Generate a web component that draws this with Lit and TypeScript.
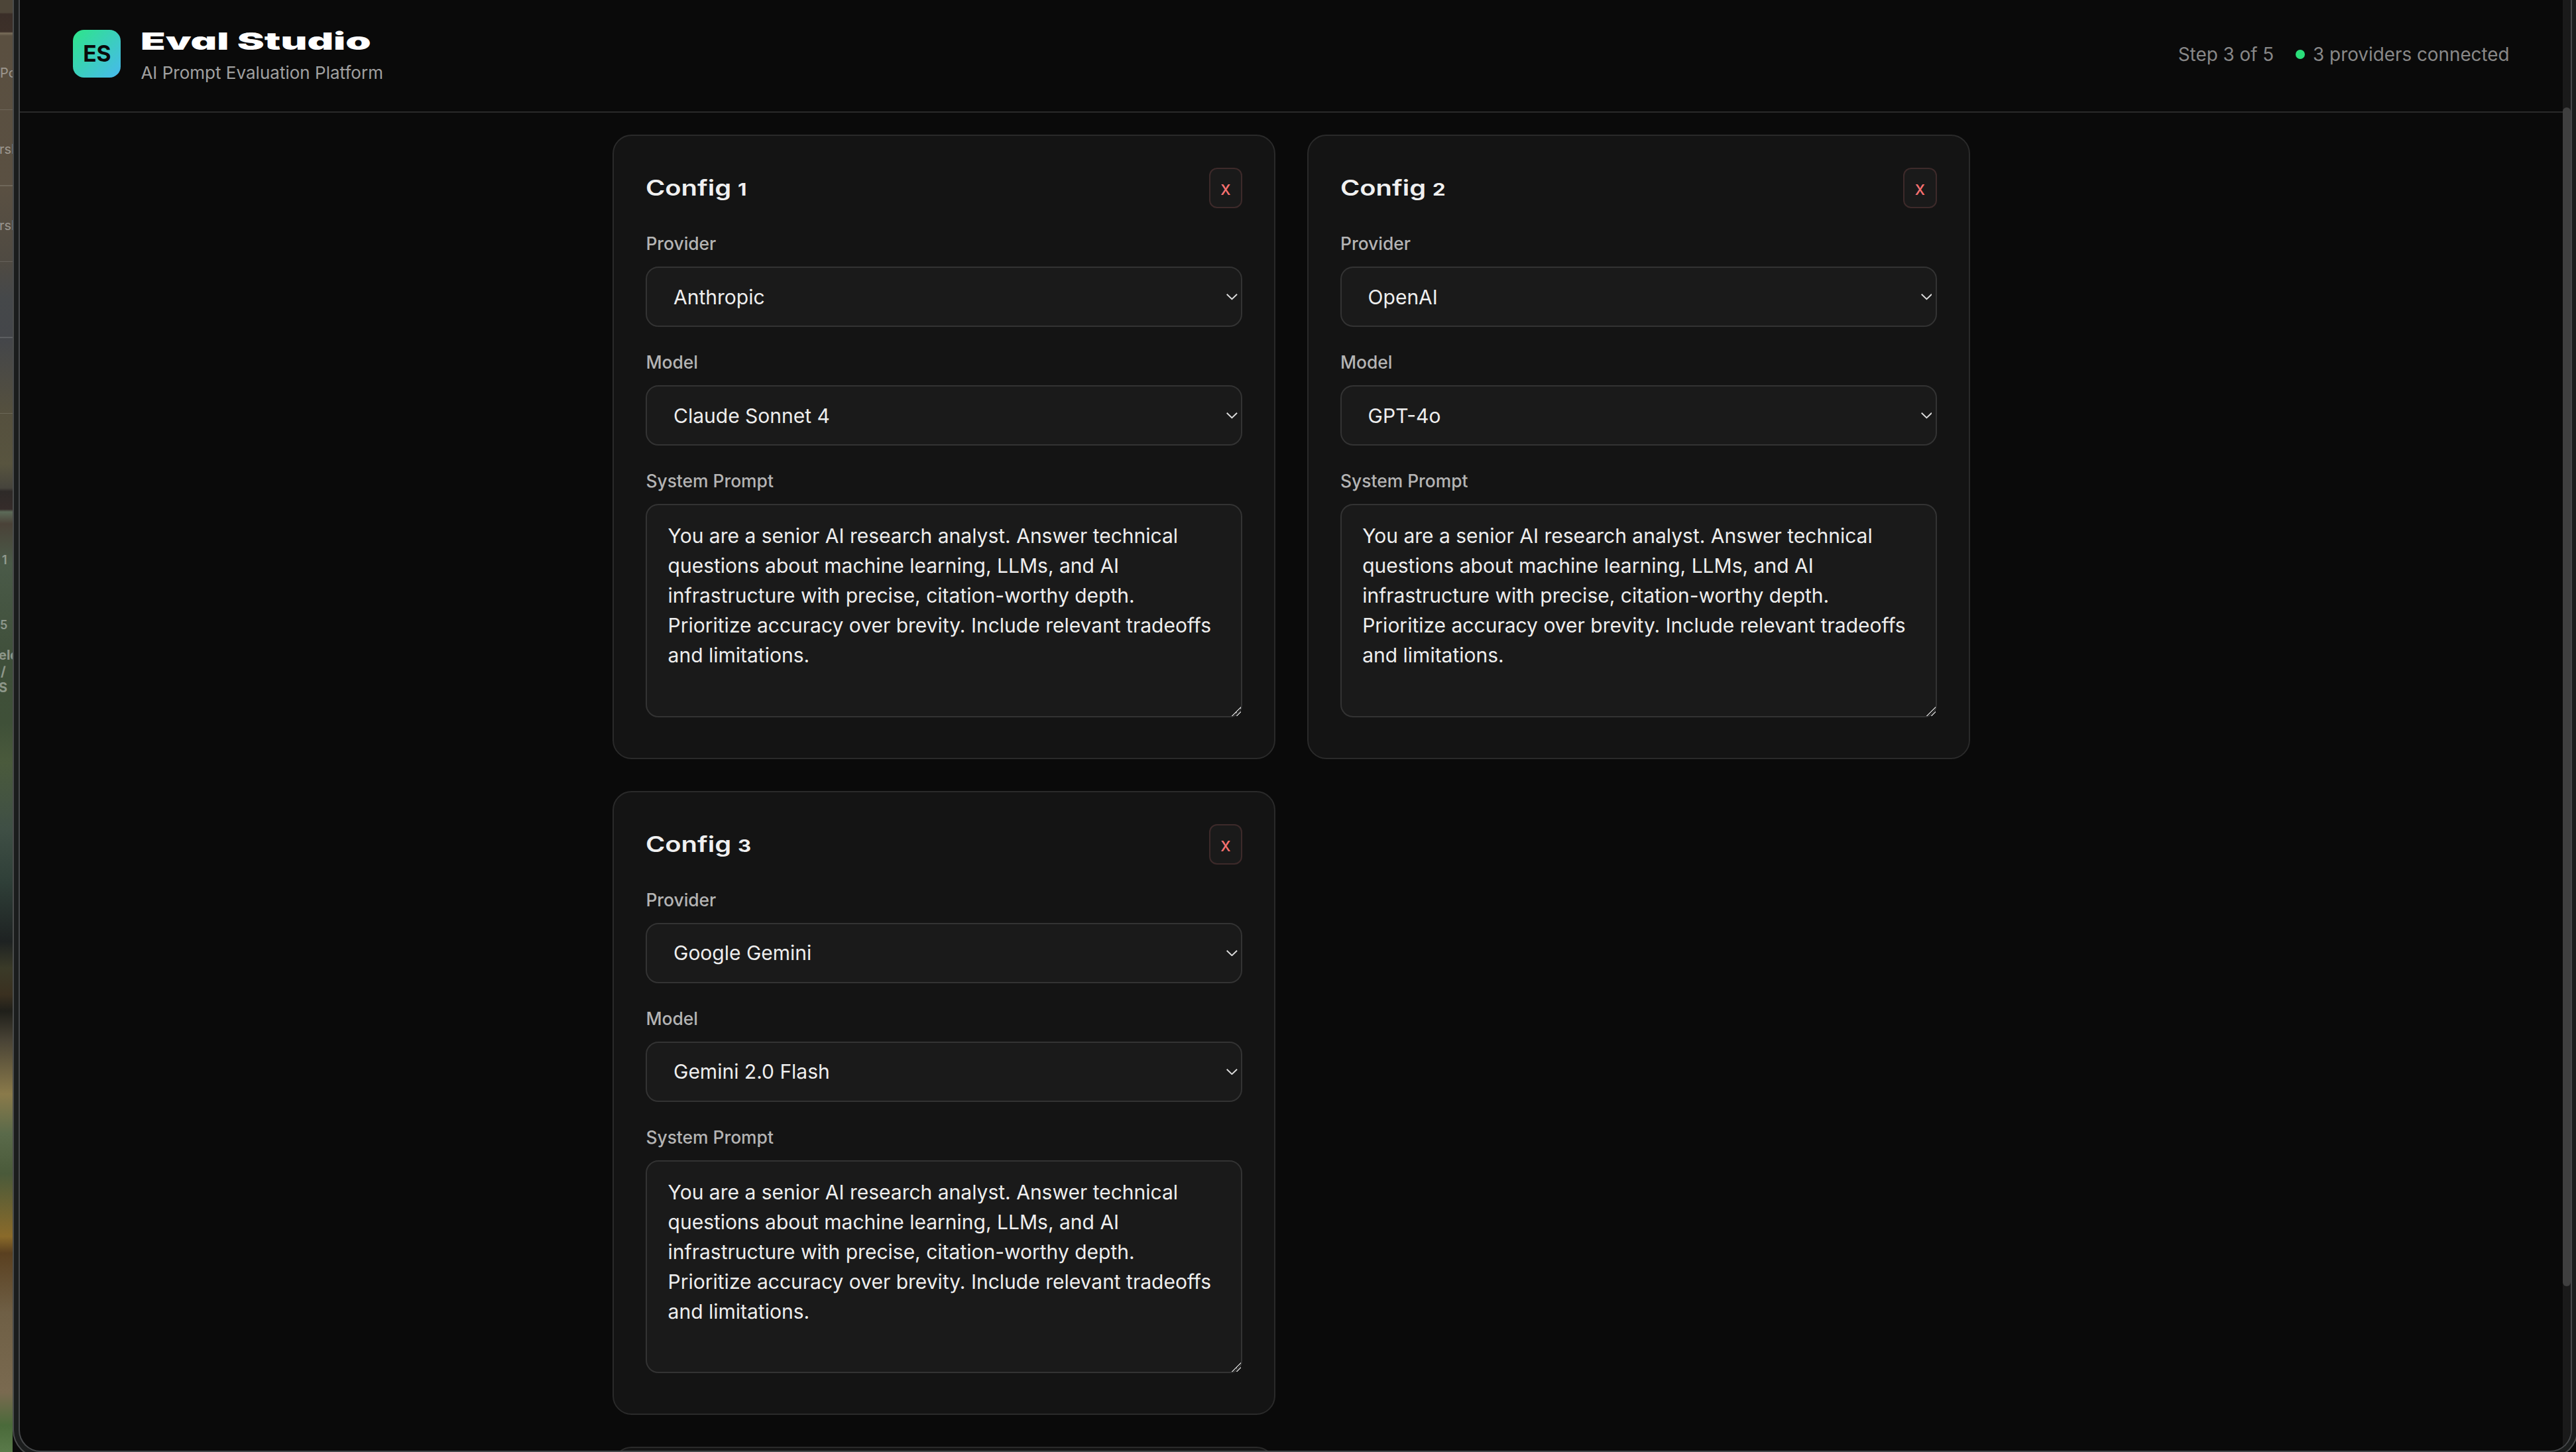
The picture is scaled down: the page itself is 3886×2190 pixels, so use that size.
import { LitElement, html, css } from 'lit';
import { customElement } from 'lit/decorators.js';

const PROMPT =
  'You are a senior AI research analyst. Answer technical questions about machine learning, LLMs, and AI infrastructure with precise, citation-worthy depth. Prioritize accuracy over brevity. Include relevant tradeoffs and limitations.';

const CONFIGS = [
  { n: 1, provider: 'Anthropic', model: 'Claude Sonnet 4' },
  { n: 2, provider: 'OpenAI', model: 'GPT-4o' },
  { n: 3, provider: 'Google Gemini', model: 'Gemini 2.0 Flash' },
];

// bits of the window behind that peek out on the left edge
const BEHIND = [
  { t: 'Po', x: 0, y: 98, s: 20, w: 400 },
  { t: 'rsh', x: -1, y: 213, s: 20, w: 400 },
  { t: 'rsh', x: -1, y: 328, s: 20, w: 400 },
  { t: '1', x: 3, y: 834, s: 18, w: 600 },
  { t: '5', x: 0, y: 932, s: 18, w: 600 },
  { t: 'eld', x: -2, y: 976, s: 20, w: 700 },
  { t: '/', x: 1, y: 1001, s: 20, w: 700 },
  { t: 'S', x: -2, y: 1025, s: 20, w: 700 },
];

@customElement('app-root')
export class AppRoot extends LitElement {
  static override styles = css`
    :host {
      display: flex;
      width: 3886px;
      height: 2190px;
      overflow: hidden;
      background: #0a0a0a;
      font-family: Inter, 'Noto Sans', sans-serif;
    }

    .behind {
      flex: none;
      width: 19px;
      height: 100%;
      position: relative;
      overflow: hidden;
      background:
        repeating-linear-gradient(to bottom, transparent 0 113px, rgba(255, 255, 255, 0.13) 113px 114.4px) 0 52px / 100% 600px no-repeat,
        linear-gradient(to bottom,
          #4d4538 0, #4d4538 19px, #3a2e28 21px, #3d3029 48px, #7a6f5c 50px, #5a4f40 54px,
          #5a5042 280px, #4f4a42 394px, #45484a 450px, #44464a 510px, #55503e 624px, #58543f 700px,
          #46443c 736px, #2e2a28 741px, #352c2a 768px, #5c6a58 772px, #4a4238 790px, #4a5a48 850px,
          #3f4f3a 1000px, #3f5038 1090px, #4a5a3c 1150px, #3f4f45 1250px, #2f3f38 1330px, #1e2222 1420px,
          #3a3a28 1460px, #3a3020 1500px, #1f1f1a 1525px, #4a4436 1570px, #8a7a4a 1650px, #5a6a4a 1710px,
          #4a5a3a 1770px, #8a6a2a 1865px, #5a4020 1890px, #6f5f45 1980px, #7a6a50 2100px, #4a6a3a 2150px, #5a7a4a 2190px);
    }

    .behind span {
      position: absolute;
      color: rgba(255, 255, 255, 0.42);
      line-height: 1.2;
      white-space: nowrap;
    }

    .frame {
      flex: none;
      box-sizing: border-box;
      width: 3870px;
      height: 2199px;
      padding: 0 7px 7px;
      background: #1b1d1d;
      border: solid #4a4c4c;
      border-width: 0 2px 2px;
      border-radius: 0 0 42px 42px;
    }

    .window {
      box-sizing: border-box;
      display: flex;
      height: 100%;
      overflow: hidden;
      background: #0a0a0a;
      border: solid #46484a;
      border-width: 0 2px 2px;
      border-radius: 0 0 33px 33px;
    }

    .page {
      flex: 1;
      min-width: 0;
      overflow: hidden;
      zoom: 2.4;
    }

    .track {
      flex: none;
      width: 12px;
      background: #1a1a1a;
    }

    .thumb {
      height: 1778px;
      margin-top: 162px;
      background: #3f3f3f;
      border-radius: 6px;
    }

    header {
      box-sizing: border-box;
      display: flex;
      align-items: center;
      justify-content: space-between;
      height: 71px;
      padding: 0 33.5px 3px;
      border-bottom: 1px solid #2a2a2a;
    }

    .brand {
      display: flex;
      align-items: center;
      gap: 12.5px;
    }

    .logo {
      width: 30px;
      height: 30px;
      display: flex;
      align-items: center;
      justify-content: center;
      border-radius: 7px;
      background: linear-gradient(135deg, #2ee589, #47b9ee);
      color: #0a0a0a;
      font-size: 14px;
      font-weight: 700;
    }

    h1 {
      margin: 1.3px 0 2.7px;
      color: #fff;
      font-size: 15px;
      font-weight: 900;
      line-height: 20px;
      font-feature-settings: 'cv11';
      transform: scaleX(1.71);
      transform-origin: left;
    }

    .tag {
      color: #a0a0a0;
      font-size: 10.85px;
      line-height: 14px;
    }

    .status {
      display: flex;
      align-items: center;
      color: #888;
      font-size: 11.6px;
      padding-top: 1px;
    }

    .dot {
      width: 6px;
      height: 6px;
      margin: 0 5px 0 13.5px;
      border-radius: 50%;
      background: #2ade7a;
    }

    main {
      display: grid;
      grid-template-columns: 416.5px 416.5px;
      justify-content: center;
      gap: 20px;
      padding-top: 13.7px;
    }

    .card {
      box-sizing: border-box;
      height: 392.3px;
      padding: 20px;
      background: #141414;
      border: 1px solid #2a2a2a;
      border-radius: 12px;
    }

    .card.next {
      grid-column: 1;
    }

    .card-head {
      display: flex;
      align-items: center;
      justify-content: space-between;
      margin-bottom: 14px;
    }

    h3 {
      margin: 0;
      color: #f0f0f0;
      font-size: 13.5px;
      font-weight: 600;
      transform: scaleX(1.23);
      transform-origin: left;
    }

    h3 span {
      font-size: 0.78em;
      font-weight: 700;
    }

    .remove {
      width: 21px;
      height: 25.5px;
      padding: 0;
      background: #1a1a1a;
      border: 1px solid #3d2a2a;
      border-radius: 5px;
      color: #f87171;
      font-family: inherit;
      font-size: 12px;
    }

    label {
      display: block;
      margin-bottom: 6px;
      color: #b4b4b4;
      font-size: 11px;
      font-weight: 550;
      line-height: 16.6px;
    }

    .select-wrap {
      position: relative;
      margin-bottom: 14px;
    }

    .select-wrap svg {
      position: absolute;
      top: 50%;
      right: 3px;
      width: 7px;
      height: 4px;
      margin-top: -2px;
      pointer-events: none;
    }

    select,
    textarea {
      display: block;
      box-sizing: border-box;
      width: 100%;
      color: #eee;
      background: #1a1a1a;
      border: 1px solid #333;
      border-radius: 8px;
      font-family: inherit;
      font-size: 12.5px;
      color-scheme: dark;
    }

    select {
      appearance: none;
      height: 38px;
      padding: 0 16.5px;
    }

    textarea {
      height: 134px;
      padding: 10px 13px;
      line-height: 1.5;
      resize: vertical;
    }

    textarea::-webkit-resizer {
      background: linear-gradient(135deg, transparent 0 52%, #bbb 52% 60%, transparent 60% 74%, #bbb 74% 82%, transparent 82%);
    }
  `;

  private renderSelect(value: string) {
    return html`
      <div class="select-wrap">
        <select><option>${value}</option></select>
        <svg viewBox="0 0 7 4" fill="none" stroke="#ddd" stroke-width="0.8"><path d="M0.3 0.3 3.5 3.4 6.7 0.3" /></svg>
      </div>
    `;
  }

  private renderCard(c: (typeof CONFIGS)[number]) {
    return html`
      <section class="card">
        <div class="card-head">
          <h3>Config <span>${c.n}</span></h3>
          <button class="remove">x</button>
        </div>
        <label>Provider</label>
        ${this.renderSelect(c.provider)}
        <label>Model</label>
        ${this.renderSelect(c.model)}
        <label>System Prompt</label>
        <textarea .value=${PROMPT}></textarea>
      </section>
    `;
  }

  protected override render() {
    return html`
      <div class="behind">
        ${BEHIND.map(
          (b) => html`<span style="left:${b.x}px;top:${b.y}px;font-size:${b.s}px;font-weight:${b.w}">${b.t}</span>`
        )}
      </div>
      <div class="frame">
        <div class="window">
          <div class="page">
            <header>
              <div class="brand">
                <div class="logo">ES</div>
                <div>
                  <h1>Eval Studio</h1>
                  <div class="tag">AI Prompt Evaluation Platform</div>
                </div>
              </div>
              <div class="status">
                <span>Step 3 of 5</span>
                <span class="dot"></span>
                <span>3 providers connected</span>
              </div>
            </header>
            <main>
              ${CONFIGS.map((c) => this.renderCard(c))}
              <section class="card next"></section>
            </main>
          </div>
          <div class="track"><div class="thumb"></div></div>
        </div>
      </div>
    `;
  }
}

declare global {
  interface HTMLElementTagNameMap {
    'app-root': AppRoot;
  }
}
